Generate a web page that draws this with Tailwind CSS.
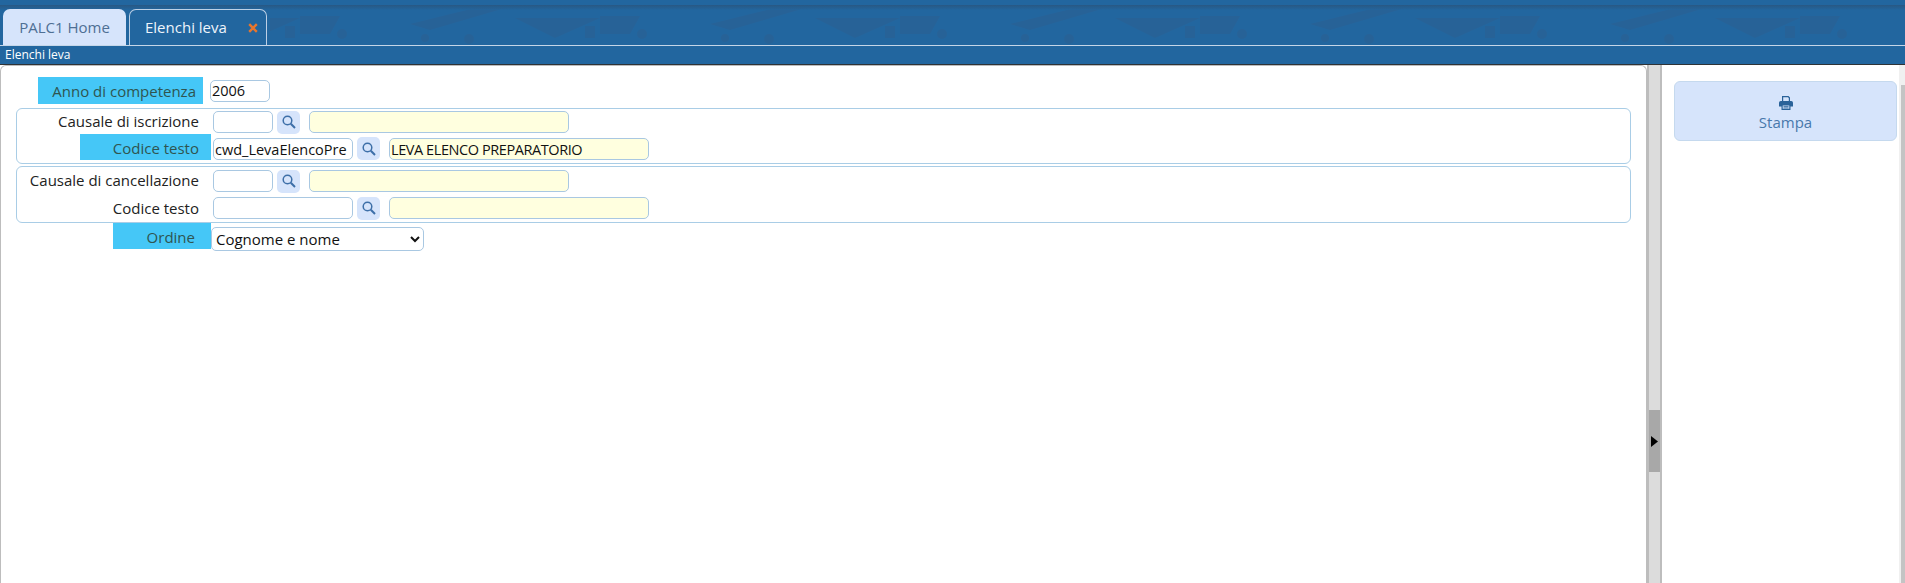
<!DOCTYPE html>
<html lang="it">
<head>
  <meta charset="UTF-8">
  <title>Elenchi leva</title>
  <script src="https://cdn.jsdelivr.net/npm/@tailwindcss/browser@4"></script>
</head>
<body class="h-[583px] w-[1905px] overflow-hidden bg-white font-['Open_Sans',sans-serif] text-[15px] text-[#222]">

  <!-- Tabs -->
  <header class="relative h-[46px] overflow-hidden border-b border-[#c5d6e8] bg-[#22669f]">
    <svg class="absolute inset-0" width="1905" height="45" viewBox="0 0 1905 45">
      <defs>
        <pattern id="bg-shapes" x="600" y="0" width="300" height="45" patternUnits="userSpaceOnUse">
          <polygon points="110,24 175,8 205,8 130,30" fill="#2a5f92"/>
          <polygon points="215,18 300,18 255,38" fill="#2a5f92"/>
          <polygon points="0,16 40,16 30,34 0,34" fill="#2a5f92"/>
          <rect x="285" y="26" width="10" height="12" fill="#2a5f92"/>
          <circle cx="42" cy="34" r="5" fill="#2a5f92"/>
          <circle cx="125" cy="38" r="4" fill="#2a5f92"/>
          <circle cx="169" cy="39" r="5" fill="#2a5f92"/>
        </pattern>
        <linearGradient id="bg-shade" x1="0" y1="0" x2="0" y2="1">
          <stop offset="0" stop-color="#2b5278"/>
          <stop offset="1" stop-color="#22669f"/>
        </linearGradient>
      </defs>
      <rect x="270" y="6" width="1635" height="39" fill="url(#bg-shapes)" opacity="0.6"/>
      <rect x="0" y="5" width="1905" height="5" fill="url(#bg-shade)" opacity="0.7"/>
    </svg>
    <nav class="relative flex h-full items-end gap-[3px] pl-[3px]">
      <a class="flex h-[36px] w-[123px] items-center justify-center rounded-t-[7px] bg-[#d6e4fb] text-[15px] text-[#4e6f94]">PALC1 Home</a>
      <a class="-mb-px flex h-[37px] w-[138px] items-center rounded-t-[7px] border border-[#bcd0e6] border-b-[#22669f] bg-[#22669f] pl-[15px] text-[15px] text-[#eef4fb]">
        Elenchi leva
        <svg class="ml-[21px]" width="10" height="10" viewBox="0 0 10 10"><path d="M1.2 1.2 8.8 8.8M8.8 1.2 1.2 8.8" stroke="#e8762d" stroke-width="2.4"/></svg>
      </a>
    </nav>
  </header>

  <!-- Titolo -->
  <div class="flex h-[19px] items-center border-b border-[#2f3336] bg-[#22669f] pl-[5px] text-[12px] text-white">Elenchi leva</div>

  <main class="flex h-[518px]">
    <!-- Form -->
    <section class="w-[1647px] rounded-t-[6px] border-x border-t border-[#bdbdbd] pt-[11px] pl-[15px]">
      <div class="flex h-[27px] items-center">
        <label class="ml-[22px] flex h-[27px] w-[165px] items-center justify-end bg-[#45c7f7] pt-[2px] pr-[7px] text-[#2f5550]">Anno di competenza</label>
        <input value="2006" class="ml-[7px] h-[22px] w-[60px] rounded-[5px] border border-[#a9c8e2] bg-white px-[1px] text-[14.5px] text-[#111]">
      </div>

      <fieldset class="mt-[4px] h-[56px] w-[1615px] rounded-[6px] border border-[#a9cde6] pt-[2px]">
        <div class="flex h-[22px] items-center">
          <label class="mb-[2px] w-[182px] text-right">Causale di iscrizione</label>
          <input class="ml-[14px] h-[22px] w-[60px] rounded-[5px] border border-[#a9c8e2]">
          <button class="ml-[4px] flex size-[23px] items-center justify-center rounded-[5px] bg-[#d6e4fb]">
            <svg width="16" height="16" viewBox="0 0 16 16" fill="none"><circle cx="6.5" cy="6.5" r="4.3" stroke="#3d6fa8" stroke-width="1.5"/><path d="M9.8 9.8 14 14" stroke="#3d6fa8" stroke-width="2"/></svg>
          </button>
          <input class="ml-[9px] h-[22px] w-[260px] rounded-[5px] border border-[#a9c8e2] bg-[#ffffdf]">
        </div>
        <div class="mt-[1px] flex h-[26px] items-end">
          <label class="ml-[63px] flex h-[26px] w-[131px] items-center justify-end bg-[#45c7f7] pt-[2px] pr-[12px] text-[#2f5550]">Codice testo</label>
          <input value="cwd_LevaElencoPre" class="ml-[2px] h-[22px] w-[140px] rounded-[5px] border border-[#a9c8e2] px-[1px] text-[14.5px] text-[#111]">
          <button class="ml-[4px] flex size-[23px] items-center justify-center rounded-[5px] bg-[#d6e4fb]">
            <svg width="16" height="16" viewBox="0 0 16 16" fill="none"><circle cx="6.5" cy="6.5" r="4.3" stroke="#3d6fa8" stroke-width="1.5"/><path d="M9.8 9.8 14 14" stroke="#3d6fa8" stroke-width="2"/></svg>
          </button>
          <input value="LEVA ELENCO PREPARATORIO" class="ml-[9px] h-[22px] w-[260px] rounded-[5px] border border-[#a9c8e2] bg-[#ffffdf] px-[1px] text-[14.5px] tracking-[-0.42px] text-[#111]">
        </div>
      </fieldset>

      <fieldset class="mt-[2px] h-[57px] w-[1615px] rounded-[6px] border border-[#a9cde6] pt-[3px]">
        <div class="flex h-[22px] items-center">
          <label class="mb-[2px] w-[182px] text-right">Causale di cancellazione</label>
          <input class="ml-[14px] h-[22px] w-[60px] rounded-[5px] border border-[#a9c8e2]">
          <button class="ml-[4px] flex size-[23px] items-center justify-center rounded-[5px] bg-[#d6e4fb]">
            <svg width="16" height="16" viewBox="0 0 16 16" fill="none"><circle cx="6.5" cy="6.5" r="4.3" stroke="#3d6fa8" stroke-width="1.5"/><path d="M9.8 9.8 14 14" stroke="#3d6fa8" stroke-width="2"/></svg>
          </button>
          <input class="ml-[9px] h-[22px] w-[260px] rounded-[5px] border border-[#a9c8e2] bg-[#ffffdf]">
        </div>
        <div class="mt-[5px] flex h-[22px] items-center">
          <label class="w-[182px] text-right">Codice testo</label>
          <input class="ml-[14px] h-[22px] w-[140px] rounded-[5px] border border-[#a9c8e2]">
          <button class="ml-[4px] flex size-[23px] items-center justify-center rounded-[5px] bg-[#d6e4fb]">
            <svg width="16" height="16" viewBox="0 0 16 16" fill="none"><circle cx="6.5" cy="6.5" r="4.3" stroke="#3d6fa8" stroke-width="1.5"/><path d="M9.8 9.8 14 14" stroke="#3d6fa8" stroke-width="2"/></svg>
          </button>
          <input class="ml-[9px] h-[22px] w-[260px] rounded-[5px] border border-[#a9c8e2] bg-[#ffffdf]">
        </div>
      </fieldset>

      <div class="flex h-[26px] items-start">
        <label class="ml-[97px] flex h-[26px] w-[98px] items-center justify-end bg-[#45c7f7] pt-[2px] pr-[16px] text-[#2f5550]">Ordine</label>
        <select class="mt-[4px] h-[24px] w-[213px] rounded-[5px] border border-[#a9c8e2] bg-white text-[15px] text-[#111]">
          <option>Cognome e nome</option>
        </select>
      </div>
    </section>

    <!-- Splitter -->
    <div class="flex w-[15px] items-start border-x-2 border-[#bdbdbd] bg-[#dcdcdc]">
      <div class="mt-[345px] flex h-[62px] w-full items-center justify-start bg-[#a8a8a8] pl-[2px]">
        <svg width="7" height="11" viewBox="0 0 7 11"><path d="M0 0 7 5.5 0 11Z" fill="#000"/></svg>
      </div>
    </div>

    <!-- Azioni -->
    <aside class="flex flex-1 justify-between pt-[16px] pl-[12px]">
      <button class="flex h-[60px] w-[223px] flex-col items-center justify-start rounded-[6px] border border-[#c5d9ee] bg-[#d6e4fb] pt-[14px] text-[15px] text-[#4878ab]">
        <svg width="14" height="14" viewBox="0 0 14 14"><path fill="#2a6299" fill-rule="evenodd" d="M3 0h6.500L11 1.500V5H9.800V2.200L9 1.200H4.200V5H3zM1.800 5h10.400A1.800 1.800 0 0 1 14 6.800V10.500h-2.500v3.500h-9V10.500H0V6.800A1.800 1.800 0 0 1 1.800 5zM3.700 9.500v3.300h6.600V9.500zM4.500 10.300h5v.7h-5zM4.500 11.500h5v.7h-5z"/></svg>
        <span class="mt-[1px]">Stampa</span>
      </button>
      <div class="-mt-[16px] flex h-[518px] w-[6px] flex-col items-end bg-[#f0f0f0] pt-[20px]">
        <div class="h-full w-[4px] bg-[#c4c4c4]"></div>
      </div>
    </aside>
  </main>
</body>
</html>
